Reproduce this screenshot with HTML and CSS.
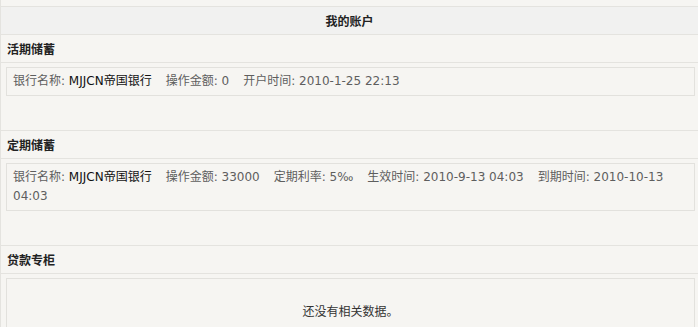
FILE: index.html
```html
<!DOCTYPE html>
<html lang="zh-CN">
<head>
<meta charset="utf-8">
<title>我的账户</title>
<link rel="stylesheet" href="styles.css">
</head>
<body>
<div class="panel">
  <div class="panel-head">我的账户</div>

  <section class="section">
    <div class="section-title">活期储蓄</div>
    <div class="section-body">
      <p class="record"><span class="item">银行名称: <b class="value">MJJCN帝国银行</b></span><i class="gap"></i><span class="item">操作金额: 0</span><i class="gap"></i><span class="item">开户时间: 2010-1-25 22:13</span></p>
    </div>
  </section>

  <section class="section">
    <div class="section-title">定期储蓄</div>
    <div class="section-body">
      <p class="record"><span class="item">银行名称: <b class="value">MJJCN帝国银行</b></span><i class="gap"></i><span class="item">操作金额: 33000</span><i class="gap"></i><span class="item">定期利率: 5‰</span><i class="gap"></i><span class="item">生效时间: 2010-9-13 04:03</span><i class="gap"></i><span class="item">到期时间: 2010-10-13</span> <span class="item">04:03</span></p>
    </div>
  </section>

  <section class="section">
    <div class="section-title">贷款专柜</div>
    <div class="section-body">
      <p class="record empty">还没有相关数据。</p>
    </div>
  </section>
</div>
</body>
</html>
```

FILE: styles.css
```css
html, body {
  margin: 0;
  padding: 0;
  background: #f6f5f2;
}

body {
  font-family: "DejaVu Sans", "Noto Sans CJK SC", sans-serif;
  font-size: 12px;
  color: #5e5e5e;
}

.panel {
  padding-top: 6px;
  border-left: 1px solid #e4e3df;
}

.panel-head {
  height: 27px;
  line-height: 27px;
  border-top: 1px solid #e4e3df;
  border-bottom: 1px solid #e4e3df;
  background: #f1f1f0;
  text-align: center;
  font-family: "Noto Sans CJK SC", sans-serif;
  font-weight: bold;
  color: #222;
}

.section {
  border-bottom: 1px solid #e4e3df;
}

.section-title {
  height: 27px;
  line-height: 27px;
  padding-left: 6px;
  border-bottom: 1px solid #e4e3df;
  font-family: "Noto Sans CJK SC", sans-serif;
  font-weight: bold;
  color: #222;
}

.section-body {
  padding: 4px 3px 34px 5px;
}

.record {
  margin: 0;
  border: 1px solid #e2e1dd;
  padding: 4px 6px;
  line-height: 19px;
}

.item {
  white-space: nowrap;
}

.gap {
  display: inline-block;
  width: 14px;
}

.value {
  font-weight: normal;
  color: #111;
}

.empty {
  padding: 22px 6px 10px;
  text-align: center;
  color: #333;
  font-family: "Noto Sans CJK SC", sans-serif;
}
```
